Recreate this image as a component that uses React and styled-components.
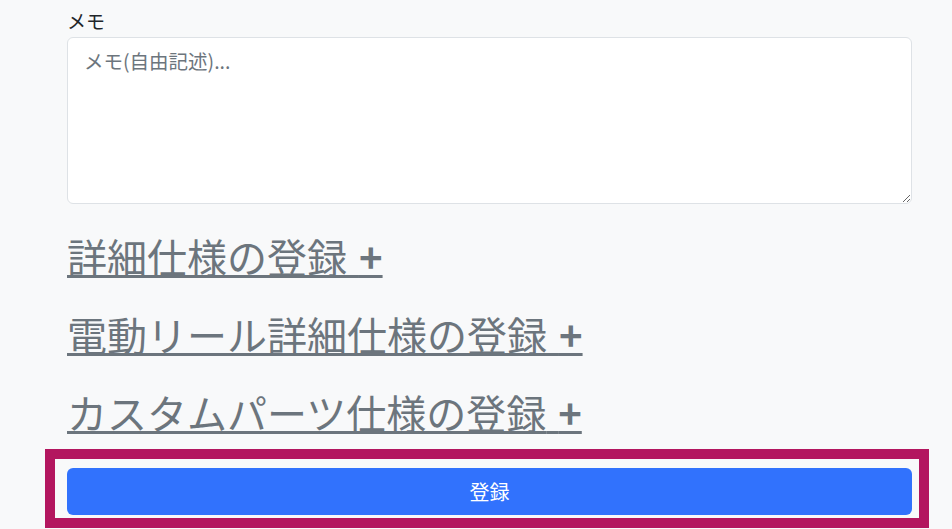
import React from "react";
import styled, { createGlobalStyle } from "styled-components";

const Global = createGlobalStyle`
  html, body { margin: 0; padding: 0; background: #f8f9fa; }
  body {
    font-family: "Noto Sans CJK JP", "Noto Sans", "Liberation Sans", sans-serif;
    color: #212529;
  }
  * { box-sizing: border-box; }
`;

const Page = styled.div`
  width: 952px;
  height: 529px;
  overflow: hidden;
  padding: 9px 0 0 67px;
`;

const Form = styled.form`
  width: 845px;
  display: flex;
  flex-direction: column;
`;

const Label = styled.label`
  display: block;
  font-size: 19px;
  line-height: 24px;
  margin-bottom: 4px;
`;

const TextArea = styled.textarea`
  display: block;
  width: 845px;
  height: 167px;
  margin: 0;
  padding: 9px 16px;
  font-family: inherit;
  font-size: 19.5px;
  line-height: 28px;
  color: #212529;
  background: #fff;
  border: 1px solid #dee2e6;
  border-radius: 6px;
  resize: vertical;
  &::placeholder { color: #6c757d; opacity: 1; }
`;

const Toggles = styled.div`
  display: flex;
  flex-direction: column;
  gap: 30px;
  margin-top: 28px;
`;

const Toggle = styled.h2`
  margin: 0;
  font-size: 40px;
  line-height: 48px;
  font-weight: 400;
  word-spacing: 3px;
  a {
    color: #6c757d;
    text-decoration: underline;
    text-decoration-thickness: 3px;
    cursor: pointer;
  }
`;

const Plus = styled.span`
  font-weight: 700;
`;

const Highlight = styled.div`
  margin: 13px 0 0 -22px;
  width: 884px;
  border: 10px solid #b3165f;
  padding: 9px 7px 3px 12px;
`;

const Submit = styled.button`
  display: block;
  width: 845px;
  height: 47px;
  border: none;
  border-radius: 6px;
  background: #3172fd;
  color: #fff;
  font-family: inherit;
  font-size: 20px;
  cursor: pointer;
`;

const sections = [
  "詳細仕様の登録",
  "電動リール詳細仕様の登録",
  "カスタムパーツ仕様の登録",
];

export default function App() {
  return (
    <>
      <Global />
      <Page>
        <Form onSubmit={(e) => e.preventDefault()}>
          <Label htmlFor="memo">メモ</Label>
          <TextArea id="memo" placeholder="メモ(自由記述)..." />
          <Toggles>
            {sections.map((s) => (
              <Toggle key={s}>
                <a>
                  {s} <Plus>+</Plus>
                </a>
              </Toggle>
            ))}
          </Toggles>
          <Highlight>
            <Submit type="submit">登録</Submit>
          </Highlight>
        </Form>
      </Page>
    </>
  );
}
